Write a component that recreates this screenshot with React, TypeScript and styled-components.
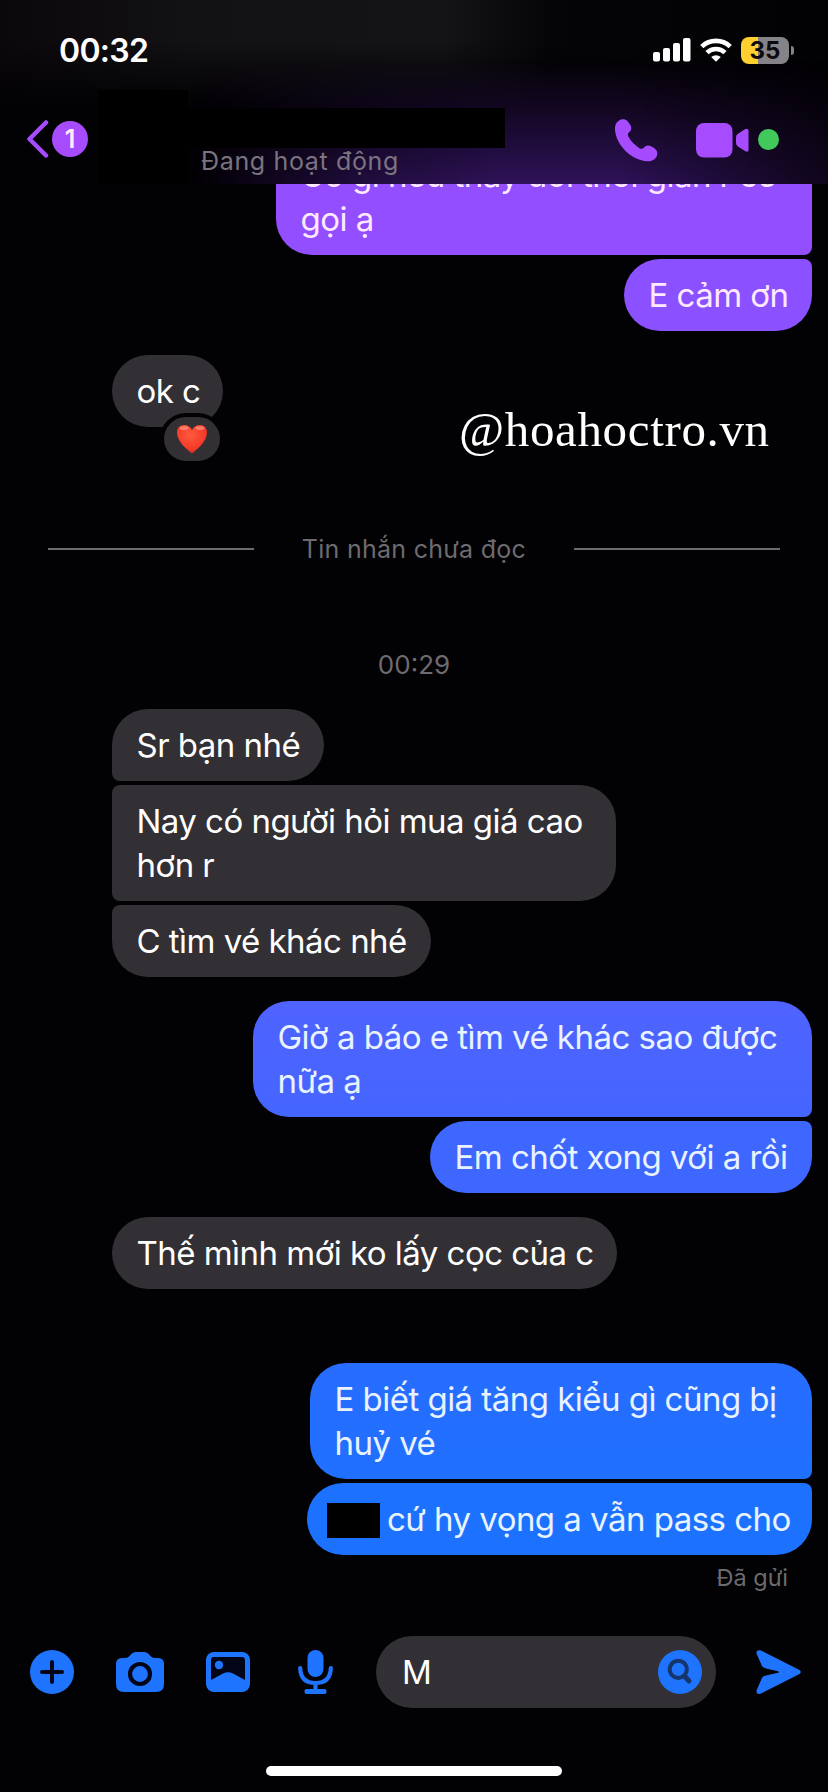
import React from "react";
import styled, { createGlobalStyle } from "styled-components";

const GlobalStyle = createGlobalStyle`
  * { box-sizing: border-box; }
  body { margin: 0; background: #020103; }
`;

const Screen = styled.div`
  width: 828px;
  height: 1792px;
  display: flex;
  flex-direction: column;
  overflow: hidden;
  background: #020103;
  color: #fff;
  font-family: Inter, "Noto Sans", sans-serif;
`;

const Top = styled.header`
  height: 184px;
  flex: none;
  position: relative;
  background:
    linear-gradient(rgba(2, 1, 3, 0) 40px, #020103 106px),
    linear-gradient(90deg, #0b080b 0, #121113 190px, #141315 440px, #050406 550px, #020103 100%);
`;

const Glow = styled.div`
  position: absolute;
  inset: 0;
  background: linear-gradient(rgba(48, 18, 90, 0) 60px, rgba(48, 18, 90, 0.45) 120px, #2f1259 184px);
  mask-image: linear-gradient(90deg, transparent 190px, rgba(0, 0, 0, 0.75) 380px, #000 500px, #000 620px, rgba(0, 0, 0, 0.3) 828px);
`;

const Redaction = styled.div<{ $x: number; $y: number; $w: number; $h: number }>`
  position: absolute;
  left: ${(p) => p.$x}px;
  top: ${(p) => p.$y}px;
  width: ${(p) => p.$w}px;
  height: ${(p) => p.$h}px;
  background: #000;
`;

const StatusBar = styled.div`
  position: relative;
  height: 100px;
  padding: 0 39px 0 59px;
  display: flex;
  align-items: center;
`;

const Clock = styled.div`
  font-size: 32px;
  font-weight: 600;
  letter-spacing: -0.7px;
  flex: 1;
`;

const Signals = styled.div`
  display: flex;
  align-items: center;
  gap: 9px;
`;

const Battery = styled.div`
  position: relative;
  width: 48px;
  height: 27px;
  border-radius: 8px;
  background: linear-gradient(90deg, #ffd02f 17px, #858387 17px);
  color: #0c0a0d;
  font-size: 24px;
  font-weight: 700;
  line-height: 28px;
  text-align: center;
  &::after {
    content: "";
    position: absolute;
    left: 50px;
    top: 9px;
    width: 3px;
    height: 9px;
    border-radius: 0 5px 5px 0;
    background: #858387;
  }
`;

const NavBar = styled.div`
  position: relative;
  height: 84px;
  padding: 0 49px 0 26px;
  display: flex;
  align-items: flex-start;
`;

const BackIcon = styled.svg`
  margin-top: 19px;
`;

const PhoneIcon = styled.svg`
  margin-top: 19px;
`;

const VideoIcon = styled.svg`
  margin: 23px 0 0 38px;
`;

const Unread = styled.div`
  width: 36px;
  height: 36px;
  margin: 21px 0 0 3px;
  border-radius: 50%;
  background: #a74bff;
  color: #ffeaff;
  font-size: 25px;
  font-weight: 600;
  line-height: 37px;
  text-align: center;
`;

const Presence = styled.div`
  margin: 45px 0 0 113px;
  flex: 1;
  font-size: 25px;
  line-height: 32px;
  color: #7a7480;
  letter-spacing: 0.65px;
`;

const Online = styled.div`
  width: 21px;
  height: 21px;
  margin: 29px 0 0 9px;
  border-radius: 50%;
  background: #42c95c;
`;

const Thread = styled.main`
  position: relative;
  height: 1432px;
  flex: none;
  display: flex;
  flex-direction: column;
  padding: 0 16px 0 112px;
  overflow: hidden;
`;

const Bubble = styled.div<{ $w: number; $color?: string; $ink?: string; $from?: "me" | "them"; $join?: "top" | "bottom" | "both" | "none"; $gap?: number }>`
  position: relative;
  width: ${(p) => p.$w}px;
  flex: none;
  align-self: ${(p) => (p.$from === "me" ? "flex-end" : "flex-start")};
  margin-top: ${(p) => p.$gap ?? 4}px;
  padding: 14px 0 14px 24.5px;
  background: ${(p) => p.$color ?? "#323034"};
  color: ${(p) => p.$ink ?? (p.$from === "me" ? "#e9f3ff" : "#fff")};
  font-size: 33px;
  line-height: 44px;
  letter-spacing: -0.53px;
  white-space: nowrap;
  border-radius: ${(p) => {
    const t = p.$join === "top" || p.$join === "both" ? 8 : 36;
    const b = p.$join === "bottom" || p.$join === "both" ? 8 : 36;
    return p.$from === "me" ? `36px ${t}px ${b}px 36px` : `${t}px 36px 36px ${b}px`;
  }};
`;

const Reaction = styled.div`
  position: absolute;
  left: 48px;
  top: 58px;
  width: 64px;
  height: 52px;
  border: 4px solid #020103;
  border-radius: 26px;
  background: #323034;
  display: flex;
  align-items: center;
  justify-content: center;
`;

const Watermark = styled.div`
  position: absolute;
  left: 459px;
  top: 220px;
  font: 49px/52px "Liberation Serif", serif;
  letter-spacing: 0.65px;
  white-space: nowrap;
`;

const Divider = styled.div`
  margin: 105px 32px 0 -64px;
  height: 34px;
  flex: none;
  display: flex;
  align-items: center;
  justify-content: space-between;
  color: #6d6b6f;
  font-size: 25px;
  letter-spacing: 0.28px;
`;

const Rule = styled.span`
  width: 206px;
  height: 2px;
  background: #6d6b6f;
`;

const Stamp = styled.div`
  margin: 82px 0 0 -96px;
  height: 34px;
  flex: none;
  text-align: center;
  font-size: 26px;
  line-height: 34px;
  color: #6d6b6f;
`;

const Redacted = styled.span`
  display: inline-block;
  width: 53px;
  height: 35px;
  margin: 0 7px 0 -4.5px;
  vertical-align: -7px;
  background: #000;
`;

const Sent = styled.div`
  margin: 7px 24px 0 0;
  align-self: flex-end;
  font-size: 23.5px;
  line-height: 32px;
  color: #6d6b6f;
`;

const Composer = styled.footer`
  height: 112px;
  flex: none;
  display: flex;
  align-items: center;
  padding: 0 20px 8px 30px;
  margin-top: 4px;
`;

const Tool = styled.span<{ $gap: number }>`
  display: flex;
  margin-right: ${(p) => p.$gap}px;
`;

const Field = styled.div`
  width: 340px;
  height: 72px;
  flex: none;
  margin-right: 40px;
  padding: 0 14px 0 26px;
  border-radius: 36px;
  background: #323034;
  display: flex;
  align-items: center;
  justify-content: space-between;
  font-size: 33px;
`;

const HomeBar = styled.div`
  width: 296px;
  height: 10px;
  margin: 34px auto 0;
  border-radius: 5px;
  background: #fff;
`;

const BLUE = "#1f74ff";
const PURPLE = "#a74bff";
const PINK_WHITE = "#ffe9ff";

export default function App() {
  return (
    <Screen>
      <GlobalStyle />
      <Top>
        <Glow />
        <Redaction $x={98} $y={90} $w={90} $h={94} />
        <Redaction $x={188} $y={108} $w={317} $h={40} />
        <StatusBar>
          <Clock>00:32</Clock>
          <Signals>
            <svg width="38" height="24" viewBox="0 0 38 24" fill="#fff">
              <rect x="0" y="14" width="7" height="9.500" rx="2" />
              <rect x="10" y="10" width="7" height="13.500" rx="2" />
              <rect x="20" y="5" width="7" height="18.500" rx="2" />
              <rect x="30" y="0" width="7.500" height="23.500" rx="2" />
            </svg>
            <svg width="32" height="24" viewBox="0 0 32 24" fill="none" stroke="#fff" strokeWidth="4.600">
              <path d="M1.800 8.600a20.500 20.500 0 0 1 28.400 0" />
              <path d="M7 14.600a13 13 0 0 1 18 0" />
              <path d="M11.200 19a7.200 7.200 0 0 1 9.600 0L16 23.800z" fill="#fff" stroke="none" />
            </svg>
            <Battery>35</Battery>
          </Signals>
        </StatusBar>
        <NavBar>
          <BackIcon width="23" height="40" viewBox="0 0 23 40" fill="none" stroke={PURPLE} strokeWidth="4.500" strokeLinecap="round" strokeLinejoin="round">
            <path d="M20 3.500L3.500 20 20 36.500" />
          </BackIcon>
          <Unread>1</Unread>
          <Presence>Đang hoạt động</Presence>
          <PhoneIcon width="43" height="43" viewBox="0 0 43 43" fill={PURPLE}>
            <path d="M7.500 0.200C11 -0.300 13.500 2.500 15.500 6.300C17.200 9.800 15.800 11.600 13.800 13.600C12.500 15 12.700 16.400 13.600 18C16 22.300 20 26.400 24.500 29.200C26.100 30.200 27.500 30.100 28.900 28.800C31 26.600 32.800 25.700 36 27.300C39.600 29 42.500 31.200 42.300 34.700C42 39.500 37.500 42.500 32.500 42.300C16 41.500 0 25 0 9.500C0 4.500 3 0.800 7.500 0.200Z" />
          </PhoneIcon>
          <VideoIcon width="53" height="35" viewBox="0 0 53 35" fill={PURPLE}>
            <rect x="0" y="0" width="36.500" height="34.500" rx="8" />
            <path d="M40 14.500Q40 12 42 10.700L49 6.200Q52.500 4.500 52.500 8V26.500Q52.500 30 49 28L42 23.500Q40 22.200 40 20Z" />
          </VideoIcon>
          <Online />
        </NavBar>
      </Top>
      <Thread>
        <Bubble $from="me" $w={536} $gap={-45} $join="bottom" $color="#934eff" $ink={PINK_WHITE}>
          Có gì nếu thay đổi thời gian r sẽ<br />gọi ạ
        </Bubble>
        <Bubble $from="me" $w={188} $join="top" $color="#8b50ff" $ink={PINK_WHITE}>E cảm ơn</Bubble>
        <Bubble $w={111} $gap={24}>
          ok c
          <Reaction>
            <svg width="32" height="30" viewBox="0 0 32 30">
              <defs>
                <radialGradient id="heart" cx="45%" cy="35%" r="70%">
                  <stop offset="0" stopColor="#ff5a40" />
                  <stop offset="0.700" stopColor="#f53a27" />
                  <stop offset="1" stopColor="#c92a20" />
                </radialGradient>
              </defs>
              <path d="M16 29.500C11 25.500 1 17.500 1 8.500C1 3.800 4 1 8 1C11.500 1 14.500 2.800 16 6C17.500 2.800 20.500 1 24 1C28 1 31 3.800 31 8.500C31 17.500 21 25.500 16 29.500Z" fill="url(#heart)" />
              <ellipse cx="8" cy="4" rx="4.500" ry="2" fill="#ffc0b0" opacity="0.450" />
              <ellipse cx="24" cy="4" rx="4.500" ry="2" fill="#ffc0b0" opacity="0.450" />
            </svg>
          </Reaction>
        </Bubble>
        <Watermark>@hoahoctro.vn</Watermark>
        <Divider>
          <Rule />
          <span>Tin nhắn chưa đọc</span>
          <Rule />
        </Divider>
        <Stamp>00:29</Stamp>
        <Bubble $w={212} $gap={27} $join="bottom">Sr bạn nhé</Bubble>
        <Bubble $w={504} $join="both">Nay có người hỏi mua giá cao<br />hơn r</Bubble>
        <Bubble $w={319} $join="top">C tìm vé khác nhé</Bubble>
        <Bubble $from="me" $w={559} $gap={24} $join="bottom" $color="linear-gradient(#4f63ff, #4565ff)">
          Giờ a báo e tìm vé khác sao được<br />nữa ạ
        </Bubble>
        <Bubble $from="me" $w={382} $join="top" $color="#3d67ff">Em chốt xong với a rồi</Bubble>
        <Bubble $w={505} $gap={24}>Thế mình mới ko lấy cọc của c</Bubble>
        <Bubble $from="me" $w={502} $gap={74} $join="bottom" $color="linear-gradient(#276dff, #2070ff)">
          E biết giá tăng kiểu gì cũng bị<br />huỷ vé
        </Bubble>
        <Bubble $from="me" $w={505} $join="top" $color="#1c72ff"><Redacted />cứ hy vọng a vẫn pass cho</Bubble>
        <Sent>Đã gửi</Sent>
      </Thread>
      <Composer>
        <Tool $gap={42}>
          <svg width="44" height="44" viewBox="0 0 44 44">
            <circle cx="22" cy="22" r="22" fill={BLUE} />
            <path d="M22 12v20M12 22h20" stroke="#020418" strokeWidth="4" strokeLinecap="round" />
          </svg>
        </Tool>
        <Tool $gap={42}>
          <svg width="48" height="40" viewBox="0 0 48 40">
            <path d="M0 12Q0 6 6 6H9Q12 6 14 3.500Q16.500 0 20 0H28Q31.500 0 34 3.500Q36 6 39 6H42Q48 6 48 12V32Q48 40 40 40H8Q0 40 0 32Z" fill={BLUE} />
            <circle cx="24" cy="22" r="10" fill={BLUE} stroke="#020418" strokeWidth="4.200" />
          </svg>
        </Tool>
        <Tool $gap={48}>
          <svg width="44" height="40" viewBox="0 0 44 40">
            <rect width="44" height="40" rx="8" fill={BLUE} />
            <path d="M5 8Q5 5 8 5H36Q39 5 39 8V28L27 21.500Q22 19 17 21.500L5 28Z" fill="#020418" />
            <circle cx="13" cy="13" r="4.200" fill={BLUE} />
          </svg>
        </Tool>
        <Tool $gap={43}>
          <svg width="35" height="44" viewBox="0 0 35 44">
            <rect x="9.500" y="0" width="16" height="27" rx="8" fill={BLUE} />
            <path d="M2.200 18Q2.500 33 17.500 33Q32.500 33 32.800 18M17.500 33V41" fill="none" stroke={BLUE} strokeWidth="4.200" strokeLinecap="round" />
            <rect x="6.500" y="39" width="22" height="5" rx="2" fill={BLUE} />
          </svg>
        </Tool>
        <Field>
          <span>M</span>
          <svg width="44" height="44" viewBox="0 0 44 44">
            <circle cx="22" cy="22" r="22" fill={BLUE} />
            <circle cx="20.300" cy="19.300" r="8.600" fill="none" stroke="#15356c" strokeWidth="4" />
            <path d="M26.500 26L31 31" stroke="#15356c" strokeWidth="5" strokeLinecap="round" />
          </svg>
        </Field>
        <svg width="45" height="44" viewBox="0 0 45 44">
          <path d="M5 0.500L43.500 20Q46 22 43.500 24L5 43.500Q0 45 0.500 40.500L5.500 29Q6.500 26 10 25.500L22 22.800Q24 22 22 21.200L10 18.500Q6.500 18 5.500 15L0.500 3.500Q0 -1 5 0.500Z" fill={BLUE} />
        </svg>
      </Composer>
      <HomeBar />
    </Screen>
  );
}
